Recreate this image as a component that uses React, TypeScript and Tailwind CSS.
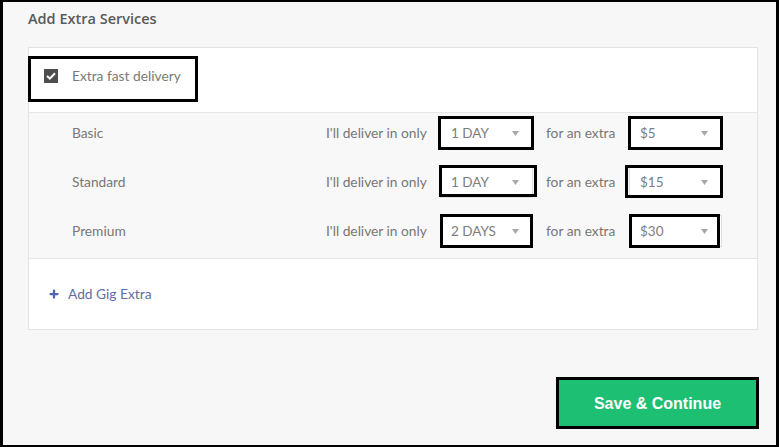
import { Plus } from 'lucide-react';

interface ExtraRow {
    name: string;
    days: string;
    price: string;
    dayMark: string;
    priceMark: string;
}

const rows: ExtraRow[] = [
    {
        name: 'Basic',
        days: '1 DAY',
        price: '$5',
        dayMark: '-left-[2px] -right-[1px] -top-[1px] -bottom-[1px]',
        priceMark: '-left-[1px] -right-[1px] -top-[1px] -bottom-[1px]',
    },
    {
        name: 'Standard',
        days: '1 DAY',
        price: '$15',
        dayMark: '-left-[1px] -right-[4px] -top-[1px] bottom-[1px]',
        priceMark: '-left-[4px] -right-[1px] -top-[1px] bottom-[0px]',
    },
    {
        name: 'Premium',
        days: '2 DAYS',
        price: '$30',
        dayMark: '-left-[0px] -right-[0px] -top-[1px] -bottom-[1px]',
        priceMark: 'left-[0px] right-[2px] -top-[1px] -bottom-[1px]',
    },
];

function Caret() {
    return (
        <svg width="7" height="5" viewBox="0 0 7 5" className="shrink-0">
            <path d="M0 0 L7 0 L3.5 5 Z" fill="#a9a9a9" />
        </svg>
    );
}

function FakeSelect({ value, mark }: { value: string; mark: string }) {
    return (
        <div className="relative h-[32px] w-[93px]">
            <div className="flex h-full items-center justify-between border border-[#dedede] bg-white pl-[10px] pr-[13px] text-[13.5px] text-[#7d7d7d]">
                <span>{value}</span>
                <Caret />
            </div>
            {/* annotation box */}
            <div className={`pointer-events-none absolute border-[3px] border-black ${mark}`} />
        </div>
    );
}

export default function App() {
    return (
        <div
            className="h-[447px] w-[779px] overflow-hidden border-b-2 border-l-[3px] border-r-[3px] border-t-2 border-black bg-[#f7f7f7] pl-[25px] pt-[7px]"
            style={{ fontFamily: 'Lato, "Open Sans", sans-serif' }}
        >
            <h2
                className="h-[38px] text-[14.5px] font-semibold leading-[20px] text-[#5a5a5a]"
                style={{ fontFamily: '"Open Sans", Lato, sans-serif' }}
            >
                Add Extra Services
            </h2>

            <div className="relative w-[730px] border border-[#e3e3e3] bg-white">
                {/* checkbox row */}
                <div className="h-[65px] border-b border-[#e6e6e6] pl-[15px] pt-[21px]">
                    <label className="flex items-center gap-[14px]">
                        <span className="flex h-[14px] w-[14px] items-center justify-center bg-[#4d4d4d]">
                            <svg width="10" height="8" viewBox="0 0 10 8">
                                <path d="M1 4 L3.8 6.6 L9 1.2" fill="none" stroke="#fff" strokeWidth="2" />
                            </svg>
                        </span>
                        <span className="text-[13.75px] leading-[14px] text-[#7a7a7a]">Extra fast delivery</span>
                    </label>
                </div>
                <div className="pointer-events-none absolute -left-[1px] top-[8px] h-[46px] w-[170px] border-[3px] border-black" />

                {/* delivery rows */}
                <div className="flex flex-col gap-[11px] border-b border-[#e6e6e6] bg-[#f8f8f8] pb-[8px] pl-[43px] pt-[1px]">
                    {rows.map((row) => (
                        <div
                            key={row.name}
                            className="grid h-[38px] grid-cols-[254px_114px_94px_95px_94px] items-center text-[13.75px] text-[#777]"
                        >
                            <span>{row.name}</span>
                            <span>I'll deliver in only</span>
                            <FakeSelect value={row.days} mark={row.dayMark} />
                            <span className="pl-[12px]">for an extra</span>
                            <FakeSelect value={row.price} mark={row.priceMark} />
                        </div>
                    ))}
                </div>

                {/* add gig extra */}
                <div className="flex h-[70px] items-center gap-[8px] pl-[19px]">
                    <Plus className="h-[12px] w-[12px] text-[#4b62ad]" strokeWidth={4.5} />
                    <span className="text-[13.75px] text-[#5d6ea5]">Add Gig Extra</span>
                </div>
            </div>

            <div className="flex w-[731px] justify-end pt-[47px]">
                <div className="border-[3px] border-black">
                    <button
                        className="flex h-[46px] w-[197px] items-center justify-center bg-[#1dbf73] pt-[2px] text-[16px] font-bold text-white"
                        style={{ fontFamily: '"Liberation Sans", Arial, sans-serif' }}
                    >
                        Save &amp; Continue
                    </button>
                </div>
            </div>
        </div>
    );
}
